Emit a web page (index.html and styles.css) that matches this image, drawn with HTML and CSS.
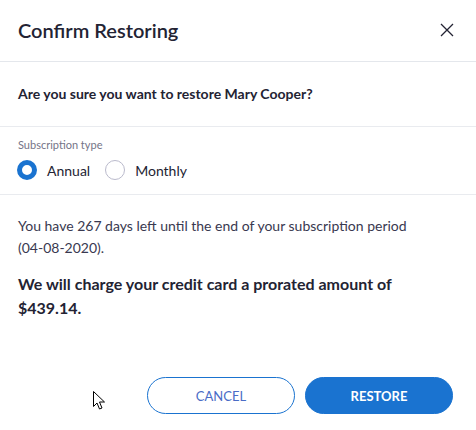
FILE: index.html
```html
<!DOCTYPE html>
<html>
<head>
<meta charset="utf-8">
<link rel="stylesheet" href="styles.css">
</head>
<body>
<div class="dialog">
  <div class="header">
    <div class="title">Confirm Restoring</div>
    <svg class="close" width="14" height="14" viewBox="0 0 14 14"><path d="M1 1L13 13M13 1L1 13" stroke="#232333" stroke-width="1.3" fill="none"/></svg>
  </div>
  <div class="question">Are you sure you want to restore Mary Cooper?</div>
  <div class="subscription">
    <div class="label">Subscription type</div>
    <div class="radios">
      <div class="radio"><span class="dot checked"></span><span>Annual</span></div>
      <div class="radio"><span class="dot"></span><span>Monthly</span></div>
    </div>
  </div>
  <div class="info">
    <p class="days">You have 267 days left until the end of your subscription period (04-08-2020).</p>
    <p class="charge">We will charge your credit card a prorated amount of $439.14.</p>
  </div>
  <div class="footer">
    <button class="btn cancel">CANCEL</button>
    <button class="btn restore">RESTORE</button>
  </div>
  <svg class="cursor" width="13" height="20" viewBox="0 0 13 20"><path d="M0.5 0.5L0.5 15.5L4 12L6.5 18L9 17L6.5 11L11.5 11Z" fill="#fff" stroke="#000" stroke-width="1"/></svg>
</div>
</body>
</html>
```

FILE: styles.css
```css
* { box-sizing: border-box; }
html, body { margin: 0; padding: 0; background: #fff; }
body { font-family: Lato, "Open Sans", sans-serif; color: #232333; width: 476px; height: 430px; overflow: hidden; }
.dialog { position: relative; width: 476px; height: 430px; }
.header { height: 62px; display: flex; align-items: center; justify-content: space-between; padding: 0 22px 2px 18px; border-bottom: 1px solid #e4e7ec; }
.title { font-size: 20px; font-weight: 600; color: #232333; letter-spacing: 0; }
.close { display: block; }
.question { height: 65px; display: flex; align-items: center; padding: 0 18px 1px; font-size: 14px; font-weight: 700; border-bottom: 1px solid #e9ebef; }
.subscription { height: 68px; padding: 10px 17px 0; border-bottom: 1px solid #e9ebef; }
.label { font-size: 11px; color: #747487; line-height: 16px; padding-left: 1px; }
.radios { display: flex; gap: 15px; margin-top: 5px; }
.radio { display: flex; align-items: center; gap: 10px; font-size: 14px; color: #232333; height: 24px; }
.dot { width: 20px; height: 20px; border-radius: 50%; border: 1px solid #babacc; display: inline-block; }
.dot.checked { border: 5px solid #1a73d0; }
.info { padding: 20px 50px 0 18px; }
.days { margin: 0; font-size: 14px; line-height: 22px; color: #393950; }
.charge { margin: 13px 0 0; font-size: 16px; font-weight: 700; line-height: 24px; color: #232333; }
.footer { position: absolute; left: 0; right: 0; top: 377px; display: flex; justify-content: flex-end; gap: 10px; padding-right: 23px; }
.btn { width: 148px; height: 37px; border-radius: 19px; font-family: Lato, sans-serif; font-size: 13px; cursor: pointer; }
.cancel { background: #fff; border: 1px solid #1a73d0; color: #4a6cc6; }
.restore { background: #1a73d0; border: 1px solid #1a73d0; color: #fff; font-weight: 700; }
.cursor { position: absolute; left: 93px; top: 391px; }
```
